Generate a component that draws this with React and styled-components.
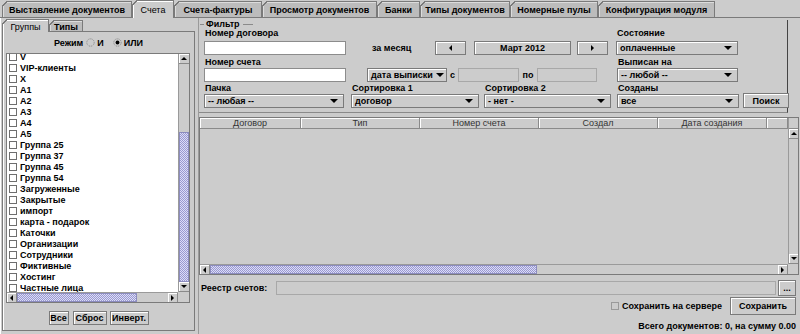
import React from 'react';
import styled, { createGlobalStyle, css } from 'styled-components';

const GlobalStyle = createGlobalStyle`
  html, body { margin: 0; padding: 0; background: #cccccc; }
  body {
    font-family: "Liberation Sans", Arial, sans-serif;
    font-size: 9px;
    color: #000;
  }
  * { box-sizing: border-box; }
`;

const topTabs = [
  { label: 'Выставление документов', w: 130 },
  { label: 'Счета', w: 42, active: true },
  { label: 'Счета-фактуры', w: 88 },
  { label: 'Просмотр документов', w: 115 },
  { label: 'Банки', w: 43 },
  { label: 'Типы документов', w: 90 },
  { label: 'Номерные пулы', w: 88 },
  { label: 'Конфигурация модуля', w: 117 },
];

const groups = [
  'V', 'VIP-клиенты', 'X', 'A1', 'A2', 'A3', 'A4', 'A5',
  'Группа 25', 'Группа 37', 'Группа 45', 'Группа 54',
  'Загруженные', 'Закрытые', 'импорт', 'карта - подарок', 'Каточки',
  'Организации', 'Сотрудники', 'Фиктивные', 'Хостинг', 'Частные лица',
];

const columns = [
  { label: 'Договор', w: 101 },
  { label: 'Тип', w: 119 },
  { label: 'Номер счета', w: 119 },
  { label: 'Создал', w: 119 },
  { label: 'Дата создания', w: 109 },
  { label: '' },
];

const bumps = css`
  background-color: #c0c0ea;
  background-image: repeating-conic-gradient(#9a9ad0 0 25%, #dcdcf8 0 50%);
  background-size: 2px 2px;
`;

const Window = styled.div`
  width: 800px;
  height: 334px;
  display: flex;
  flex-direction: column;
  overflow: hidden;
  background: #cccccc;
`;

const TabStrip = styled.div`
  display: flex;
  align-items: flex-end;
  flex: none;
  height: ${p => p.h}px;
  padding-left: ${p => p.pl || 0}px;
  border-bottom: 1px solid #7a7a7a;
`;

const Tab = styled.div`
  position: relative;
  flex: none;
  width: ${p => p.w}px;
  height: ${p => (p.active ? p.h + 2 : p.h)}px;
  margin-bottom: ${p => (p.active ? -1 : 0)}px;
  display: flex;
  align-items: center;
  justify-content: center;
  padding-top: 1px;
  background: ${p => (p.active ? '#cccccc' : '#bcbcbc')};
  border: 1px solid #7a7a7a;
  border-bottom: none;
  box-shadow: inset 1px 1px 0 ${p => (p.active ? '#ffffff' : '#dcdcdc')};
  font-weight: ${p => (p.active ? 'normal' : 'bold')};
  white-space: nowrap;
  z-index: ${p => (p.active ? 1 : 0)};

  &::before {
    content: '';
    position: absolute;
    left: -1px;
    top: -1px;
    width: 7px;
    height: 7px;
    background: linear-gradient(135deg, #cccccc 0, #cccccc 3.4px, #7a7a7a 3.4px, #7a7a7a 4.4px, transparent 4.4px);
  }
`;

const TabBody = styled.div`
  flex: 1;
  display: flex;
  min-height: 0;
  box-shadow: inset 1px 0 0 #ffffff;
`;

const LeftPane = styled.div`
  width: 195px;
  flex: none;
  display: flex;
  flex-direction: column;
  padding: 1px 0 3px 2px;
`;

const InnerPanel = styled.div`
  flex: 1;
  display: flex;
  flex-direction: column;
  border: 1px solid #7a7a7a;
  border-top: none;
  box-shadow: inset 1px 0 0 #ffffff;
`;

const ModeRow = styled.div`
  height: 21px;
  display: flex;
  align-items: center;
  justify-content: center;
  font-weight: bold;
  gap: 3px;
`;

const ModeOption = styled.span`
  display: inline-flex;
  align-items: center;
  gap: 2px;
  margin-left: ${p => p.ml || 0}px;
`;

const ListBox = styled.div`
  height: 250px;
  margin: 0 4px 0 3px;
  display: grid;
  grid-template-columns: 1fr 11px;
  grid-template-rows: 1fr 10px;
  border: 1px solid #7a7a7a;
  overflow: hidden;
`;

const ListView = styled.div`
  background: #ffffff;
  overflow: hidden;
`;

const ListInner = styled.div`
  margin-top: -3px;
`;

const ListItem = styled.div`
  height: 11px;
  display: flex;
  align-items: center;
  gap: 3px;
  padding-left: 2px;
  font-weight: bold;
  white-space: nowrap;
`;

const CheckBox = styled.span`
  flex: none;
  width: 8px;
  height: 8px;
  background: ${p => (p.gray ? '#cccccc' : '#ffffff')};
  border: 1px solid ${p => (p.gray ? '#9a9a9a' : '#6e6e6e')};
`;

const VScroll = styled.div`
  display: flex;
  flex-direction: column;
  background: #cccccc;
  border-left: 1px solid #9a9a9a;
`;

const HScroll = styled.div`
  display: flex;
  background: #cccccc;
  border-top: 1px solid #9a9a9a;
`;

const ArrowBox = styled.div`
  flex: none;
  ${p => (p.horizontal ? 'width: 10px;' : 'height: 10px;')}
  display: flex;
  align-items: center;
  justify-content: center;
  background: #cccccc;
  box-shadow: inset 1px 1px 0 #ffffff;
  ${p => (p.horizontal ? 'border-right' : 'border-bottom')}: 1px solid #8a8a8a;
`;

const Track = styled.div`
  flex: 1;
  display: flex;
  flex-direction: ${p => (p.horizontal ? 'row' : 'column')};
  justify-content: ${p => (p.end ? 'flex-end' : 'flex-start')};
  background: #cccccc;
`;

const Thumb = styled.div`
  flex: none;
  ${p => (p.horizontal ? `width: ${p.size}px;` : `height: ${p.size}px;`)}
  ${bumps};
  border: 1px solid #8c8cbe;
`;

const Corner = styled.div`
  background: #cccccc;
`;

const Tri = styled.span`
  flex: none;
  width: 0;
  height: 0;
  ${p => p.dir === 'up' && css`
    border-left: ${p.s || 3}px solid transparent;
    border-right: ${p.s || 3}px solid transparent;
    border-bottom: ${p.s || 3}px solid #000;
  `}
  ${p => p.dir === 'down' && css`
    border-left: ${p.s || 3}px solid transparent;
    border-right: ${p.s || 3}px solid transparent;
    border-top: ${p.s || 3}px solid #000;
  `}
  ${p => p.dir === 'left' && css`
    border-top: ${p.s || 3}px solid transparent;
    border-bottom: ${p.s || 3}px solid transparent;
    border-right: ${p.s || 3}px solid #000;
  `}
  ${p => p.dir === 'right' && css`
    border-top: ${p.s || 3}px solid transparent;
    border-bottom: ${p.s || 3}px solid transparent;
    border-left: ${p.s || 3}px solid #000;
  `}
`;

const ButtonRow = styled.div`
  display: flex;
  justify-content: center;
  margin-top: 8px;
`;

const Button = styled.div`
  flex: none;
  width: ${p => p.w}px;
  height: ${p => p.h || 14}px;
  margin-left: ${p => p.ml || 0}px;
  display: flex;
  align-items: center;
  justify-content: center;
  background: #cccccc;
  border: 1px solid #7a7a7a;
  box-shadow: inset 1px 1px 0 #ffffff;
  font-weight: bold;
  white-space: nowrap;
`;

const RightPane = styled.div`
  flex: 1;
  min-width: 0;
  display: flex;
  flex-direction: column;
  margin-left: 3px;
  padding-top: 2px;
  border-left: 1px solid #9a9a9a;
`;

const Filter = styled.div`
  width: 589px;
  padding-bottom: 4px;
  border-right: 1px solid #444444;
  border-bottom: 1px solid #8a8a8a;
`;

const Legend = styled.div`
  height: 8px;
  display: flex;
  align-items: center;
  font-weight: bold;

  &::before {
    content: '';
    width: 4px;
    height: 1px;
    margin: 0 2px 0 1px;
    background: #8a8a8a;
  }
  &::after {
    content: '';
    width: 10px;
    height: 1px;
    margin-left: 3px;
    background: #8a8a8a;
  }
`;

const Row = styled.div`
  display: flex;
  align-items: flex-end;
  margin-top: ${p => p.mt || 0}px;
  padding-left: 5px;
`;

const FieldCol = styled.div`
  flex: none;
  display: flex;
  flex-direction: column;
  width: ${p => p.w}px;
  margin-left: ${p => p.ml || 0}px;
  gap: ${p => p.gap || 0}px;
`;

const Label = styled.div`
  height: 11px;
  line-height: 11px;
  padding-left: 1px;
  font-weight: bold;
  white-space: nowrap;
`;

const Caption = styled.div`
  flex: none;
  width: ${p => p.w}px;
  height: 14px;
  line-height: 14px;
  padding-left: ${p => p.pl || 0}px;
  text-align: ${p => p.align || 'left'};
  font-weight: bold;
  white-space: nowrap;
`;

const TextField = styled.div`
  flex: ${p => (p.grow ? 1 : 'none')};
  height: 14px;
  ${p => p.w && `width: ${p.w}px;`}
  background: ${p => (p.disabled ? '#cccccc' : '#ffffff')};
  border: 1px solid ${p => (p.disabled ? '#a8a8a8' : '#8c8c8c')};
`;

const Combo = styled.div`
  flex: none;
  height: 14px;
  ${p => p.w && `width: ${p.w}px;`}
  margin-left: ${p => p.ml || 0}px;
  display: flex;
  align-items: center;
  justify-content: space-between;
  gap: 3px;
  padding: 0 ${p => p.pr || 5}px 0 3px;
  background: #cccccc;
  border: 1px solid #7a7a7a;
  box-shadow: inset 1px 1px 0 #ffffff;
  font-weight: bold;
  white-space: nowrap;
  overflow: hidden;
`;

const Table = styled.div`
  height: 158px;
  margin: 4px 1px 0 0;
  display: grid;
  grid-template-columns: 1fr 10px;
  grid-template-rows: 1fr 10px;
  border: 1px solid #7a7a7a;
`;

const TableView = styled.div`
  display: flex;
  flex-direction: column;
  background: #cccccc;
`;

const HeaderRow = styled.div`
  display: flex;
  height: 11px;
`;

const HeadCell = styled.div`
  width: ${p => (p.w ? `${p.w}px` : 'auto')};
  flex: ${p => (p.w ? 'none' : 1)};
  line-height: 10px;
  text-align: center;
  color: #333333;
  background: #cccccc;
  border-right: 1px solid #8a8a8a;
  border-bottom: 1px solid #8a8a8a;
  box-shadow: inset 1px 1px 0 #ffffff;
  white-space: nowrap;
  overflow: hidden;
`;

const HeadCorner = styled.div`
  flex: none;
  height: 11px;
  border-bottom: 1px solid #8a8a8a;
`;

const RegistryRow = styled.div`
  display: flex;
  align-items: center;
  height: 16px;
  margin-top: 5px;
  padding: 0 4px 0 2px;
  gap: 2px;
`;

const SaveRow = styled.div`
  display: flex;
  align-items: center;
  justify-content: flex-end;
  height: 18px;
  margin-top: 1px;
  padding-right: 4px;
  font-weight: bold;
`;

const SaveCheck = styled.span`
  display: inline-flex;
  align-items: center;
  gap: 3px;
  margin-right: 8px;
`;

const TotalRow = styled.div`
  height: 12px;
  line-height: 12px;
  margin-top: 5px;
  padding-right: 4px;
  text-align: right;
  font-weight: bold;
`;

const Radio = ({ on }) => (
  <svg width="9" height="9" viewBox="0 0 9 9">
    <circle cx="4.5" cy="4.5" r="3.7" fill="#cccccc" stroke="#8a8a8a" strokeWidth="0.9" strokeDasharray="1.2 0.8" />
    {on && <circle cx="4.5" cy="4.5" r="1.9" fill="#000000" />}
  </svg>
);

const App = () => (
  <Window>
    <GlobalStyle />
    <TabStrip h={18} pl={2}>
      {topTabs.map(t => (
        <Tab key={t.label} w={t.w} h={16} active={t.active}>
          {t.label}
        </Tab>
      ))}
    </TabStrip>

    <TabBody>
      <LeftPane>
        <TabStrip h={13}>
          <Tab w={47} h={11} active>Группы</Tab>
          <Tab w={34} h={11}>Типы</Tab>
        </TabStrip>
        <InnerPanel>
          <ModeRow>
            Режим
            <ModeOption><Radio />И</ModeOption>
            <ModeOption ml={6}><Radio on />ИЛИ</ModeOption>
          </ModeRow>
          <ListBox>
            <ListView>
              <ListInner>
                {groups.map(g => (
                  <ListItem key={g}>
                    <CheckBox />
                    {g}
                  </ListItem>
                ))}
              </ListInner>
            </ListView>
            <VScroll>
              <ArrowBox><Tri dir="up" /></ArrowBox>
              <Track end>
                <Thumb size={150} />
              </Track>
              <ArrowBox><Tri dir="down" /></ArrowBox>
            </VScroll>
            <HScroll>
              <ArrowBox horizontal><Tri dir="left" /></ArrowBox>
              <Track horizontal>
                <Thumb horizontal size={120} />
              </Track>
              <ArrowBox horizontal><Tri dir="right" /></ArrowBox>
            </HScroll>
            <Corner />
          </ListBox>
          <ButtonRow>
            <Button w={20}>Все</Button>
            <Button w={34} ml={4}>Сброс</Button>
            <Button w={39} ml={3}>Инверт.</Button>
          </ButtonRow>
        </InnerPanel>
      </LeftPane>

      <RightPane>
        <Filter>
          <Legend>Фильтр</Legend>
          <Row>
            <FieldCol w={142} gap={2}>
              <Label>Номер договора</Label>
              <TextField />
            </FieldCol>
            <Caption w={89} pl={26}>за месяц</Caption>
            <Button w={31}><Tri dir="left" /></Button>
            <Button w={97} ml={8}>Март 2012</Button>
            <Button w={31} ml={6}><Tri dir="right" /></Button>
            <FieldCol w={122} ml={8} gap={2}>
              <Label>Состояние</Label>
              <Combo>оплаченные<Tri dir="down" s={4} /></Combo>
            </FieldCol>
          </Row>
          <Row mt={2}>
            <FieldCol w={142}>
              <Label>Номер счета</Label>
              <TextField />
            </FieldCol>
            <Combo w={80} ml={21} pr={3}>дата выписки<Tri dir="down" s={4} /></Combo>
            <Caption w={11} align="center">с</Caption>
            <TextField w={61} disabled />
            <Caption w={18} align="center">по</Caption>
            <TextField w={60} disabled />
            <FieldCol w={121} ml={20}>
              <Label>Выписан на</Label>
              <Combo>-- любой --<Tri dir="down" s={4} /></Combo>
            </FieldCol>
          </Row>
          <Row mt={1}>
            <FieldCol w={140}>
              <Label>Пачка</Label>
              <Combo>-- любая --<Tri dir="down" s={4} /></Combo>
            </FieldCol>
            <FieldCol w={128} ml={7}>
              <Label>Сортировка 1</Label>
              <Combo>договор<Tri dir="down" s={4} /></Combo>
            </FieldCol>
            <FieldCol w={127} ml={5}>
              <Label>Сортировка 2</Label>
              <Combo>- нет -<Tri dir="down" s={4} /></Combo>
            </FieldCol>
            <FieldCol w={122} ml={6}>
              <Label>Созданы</Label>
              <Combo>все<Tri dir="down" s={4} /></Combo>
            </FieldCol>
            <Button w={46} h={15} ml={4}>Поиск</Button>
          </Row>
        </Filter>

        <Table>
          <TableView>
            <HeaderRow>
              {columns.map((c, i) => (
                <HeadCell key={i} w={c.w}>{c.label}</HeadCell>
              ))}
            </HeaderRow>
          </TableView>
          <VScroll>
            <HeadCorner />
            <ArrowBox><Tri dir="up" /></ArrowBox>
            <Track />
            <ArrowBox><Tri dir="down" /></ArrowBox>
          </VScroll>
          <HScroll>
            <ArrowBox horizontal><Tri dir="left" /></ArrowBox>
            <Track horizontal>
              <Thumb horizontal size={327} />
            </Track>
            <ArrowBox horizontal><Tri dir="right" /></ArrowBox>
          </HScroll>
          <Corner />
        </Table>

        <RegistryRow>
          <Caption w={73}>Реестр счетов:</Caption>
          <TextField grow disabled />
          <Button w={18} h={16}>...</Button>
        </RegistryRow>
        <SaveRow>
          <SaveCheck>
            <CheckBox gray />
            Сохранить на сервере
          </SaveCheck>
          <Button w={66} h={18}>Сохранить</Button>
        </SaveRow>
        <TotalRow>Всего документов: 0, на сумму 0.00</TotalRow>
      </RightPane>
    </TabBody>
  </Window>
);

export default App;
